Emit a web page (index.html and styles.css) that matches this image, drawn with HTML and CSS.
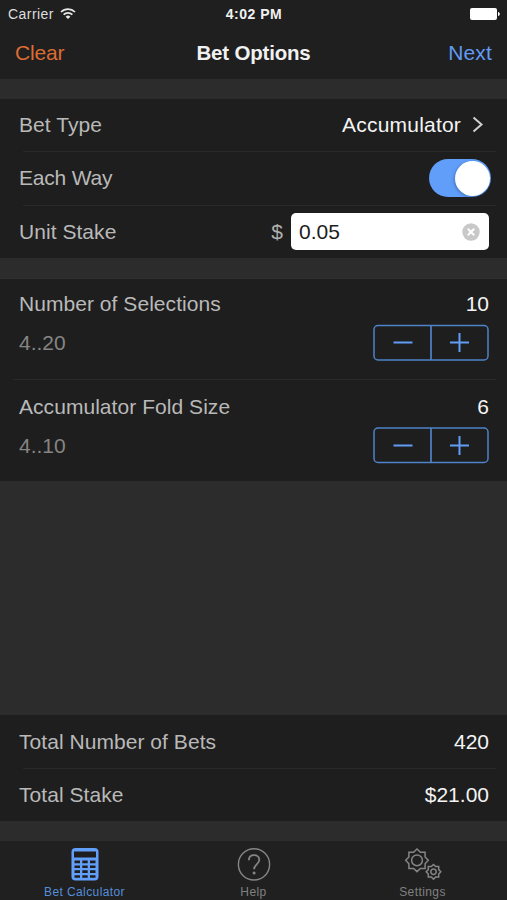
FILE: index.html
```html
<!DOCTYPE html>
<html lang="en">
<head>
<meta charset="utf-8">
<title>Bet Options</title>
<link rel="stylesheet" href="styles.css">
</head>
<body>
<div class="app">
  <header class="header">
    <div class="status">
      <div class="carrier"><span>Carrier</span>
        <svg width="16" height="12" viewBox="0 0 16 12" fill="none" stroke="#e6e6e6" stroke-width="1.7"><path d="M1 4a10 10 0 0 1 14 0M3.6 6.6a6.3 6.3 0 0 1 8.8 0"/><path d="M5.6 8.7a3.4 3.4 0 0 1 4.8 0L8 11.1z" fill="#e6e6e6" stroke="none"/></svg>
      </div>
      <span class="clock">4:02 PM</span>
      <svg class="battery" width="30" height="12" viewBox="0 0 30 12" fill="#fff"><rect width="27" height="12" rx="2"/><path d="M28 4c2.4.4 2.4 3.6 0 4z"/></svg>
    </div>
    <nav class="nav"><span class="clear">Clear</span><h1 class="title">Bet Options</h1><span class="next">Next</span></nav>
  </header>

  <section class="group first">
    <div class="row"><span class="label">Bet Type</span><span class="value accumulator">Accumulator</span>
      <svg class="chevron" width="12" height="18" viewBox="0 0 12 18" fill="none" stroke="#d0d0d0" stroke-width="2"><path d="M1.5 1.5 9.5 8.5l-8 7"/></svg>
    </div>
    <div class="row"><span class="label each-way">Each Way</span><span class="switch"><i class="knob"></i></span></div>
    <div class="row"><span class="label">Unit Stake</span><span class="dollar">$</span>
      <div class="field"><span class="amount">0.05</span>
        <svg width="18" height="18" viewBox="0 0 18 18"><circle cx="9" cy="9" r="8.7" fill="#c8c8c8"/><path d="m5.8 5.8 6.4 6.4m0-6.4-6.4 6.4" stroke="#fff" stroke-width="2"/></svg>
      </div>
    </div>
  </section>

  <section class="group counts">
    <div class="count">
      <div class="line"><span class="label">Number of Selections</span><span class="value">10</span></div>
      <div class="line second"><span class="range">4..20</span>
        <svg class="stepper" width="116" height="37" viewBox="0 0 116 37" fill="none" stroke="#4f83c9"><rect x="1" y="1.5" width="114" height="34.5" rx="4" stroke-width="1.5"/><path d="M58 1.5V36" stroke-width="1.7"/><path d="M20.5 18.5h19M77 18.5h19M86.5 9v19" stroke="#619cf5" stroke-width="2"/></svg>
      </div>
    </div>
    <div class="count">
      <div class="line"><span class="label">Accumulator Fold Size</span><span class="value">6</span></div>
      <div class="line second"><span class="range">4..10</span>
        <svg class="stepper" width="116" height="37" viewBox="0 0 116 37" fill="none" stroke="#4f83c9"><rect x="1" y="1" width="114" height="34.5" rx="4" stroke-width="1.5"/><path d="M58 1v34.5" stroke-width="1.7"/><path d="M20.5 18.5h19M77 18.5h19M86.5 9v19" stroke="#619cf5" stroke-width="2"/></svg>
      </div>
    </div>
  </section>

  <section class="group totals">
    <div class="row"><span class="label">Total Number of Bets</span><span class="value">420</span></div>
    <div class="row"><span class="label">Total Stake</span><span class="value">$21.00</span></div>
  </section>

  <footer class="tabs">
    <div class="tab active">
      <svg width="28" height="34" viewBox="0 0 28 34"><rect x=".5" width="27" height="32.5" rx="4" fill="#619ffb"/><path fill="#1e1e1e" d="M3 3.5h22v6H3zM3.5 12.5H9v2.7H3.5zM11.3 12.5h5.4v2.7h-5.4zM19 12.5h5.5v2.7H19zM3.5 17.4H9v2.7H3.5zM11.3 17.4h5.4v2.7h-5.4zM19 17.4h5.5v2.7H19zM3.5 22.3H9V25H3.5zM11.3 22.3h5.4V25h-5.4zM19 22.3h5.5V25H19zM3.5 27.2H9v2.5H3.5zM11.3 27.2h5.4v2.5h-5.4zM19 27.2h5.5v2.5H19z"/></svg>
      <span>Bet Calculator</span>
    </div>
    <div class="tab">
      <svg width="34" height="34" viewBox="0 0 34 34" fill="none" stroke="#858585" stroke-width="1.4"><circle cx="17" cy="16.4" r="15.6"/><path d="M11.8 12.2c.2-3.2 2.2-5 5.2-5s5.3 1.8 5.3 4.6c0 2.2-1.2 3.3-2.8 4.8-1.7 1.5-2.4 2.5-2.4 4.6" stroke-width="1.8"/><circle cx="17.1" cy="25" r=".8" fill="#858585"/></svg>
      <span>Help</span>
    </div>
    <div class="tab">
      <svg width="38" height="34" viewBox="0 0 38 34" fill="none" stroke="#858585" stroke-width="1.5"><g transform="translate(13 12.3)"><path d="M0-11.3 3.4-8.1 8.1-8.1 8.1-3.4 11.3 0 8.1 3.4 8.1 8.1 3.4 8.1 0 11.3-3.4 8.1-8.1 8.1-8.1 3.4-11.3 0-8.1-3.4-8.1-8.1-3.4-8.1z"/><circle r="5.4"/></g><g transform="translate(29.5 23.8)"><path d="M0-7.3 2.2-5.2 5.2-5.2 5.2-2.2 7.3 0 5.2 2.2 5.2 5.2 2.2 5.2 0 7.3-2.2 5.2-5.2 5.2-5.2 2.2-7.3 0-5.2-2.2-5.2-5.2-2.2-5.2z"/><circle r="2.7"/></g></svg>
      <span>Settings</span>
    </div>
  </footer>
</div>
</body>
</html>
```
FILE: styles.css
```css
* { box-sizing: border-box; }
body { margin: 0; background: #2c2c2c; font-family: "Liberation Sans", Arial, sans-serif; font-size: 21px; color: #f1f1f1; }
svg { display: block; flex: none; }
.app { width: 507px; height: 900px; display: flex; flex-direction: column; overflow: hidden; }
.header { height: 79px; background: #1f1f1f; flex: none; }
.status { height: 28px; display: grid; grid-template-columns: 1fr auto 1fr; align-items: center; padding: 0 7px 0 8px; font-size: 14px; }
.carrier { display: flex; align-items: center; gap: 6px; color: #dedede; letter-spacing: .45px; }
.clock { font-weight: bold; font-size: 14px; letter-spacing: .5px; }
.battery { justify-self: end; }
.nav { height: 51px; display: grid; grid-template-columns: 1fr auto 1fr; align-items: center; padding: 0 15px 2px 15px; line-height: 24px; }
.clear { color: #dc6c32; letter-spacing: -.2px; }
.title { margin: 0; font-size: 20.5px; font-weight: bold; letter-spacing: -.2px; }
.next { color: #619bf2; justify-self: end; letter-spacing: .15px; }
.group { background: #1e1e1e; flex: none; }
.first { margin-top: 20px; height: 159px; }
.row { height: 53.5px; display: flex; align-items: center; padding: 0 18px 0 19px; }
.first .row:first-child { height: 52px; }
.first .row + .row { padding-top: 1px; }
.totals .row:first-child { height: 53px; }
.row + .row, .count + .count { background: linear-gradient(#292929, #292929) 23px 0 / 473px 1px no-repeat; }
.label { color: #b9b9b9; margin-right: auto; white-space: nowrap; letter-spacing: .05px; }
.each-way { letter-spacing: -.2px; }
.value { color: #f4f4f4; }
.accumulator { letter-spacing: .2px; }
.chevron { margin: 0 5px 0 11px; }
.switch { width: 62px; height: 38px; margin-right: -2px; border-radius: 19px; background: #609ef9; display: flex; justify-content: flex-end; align-items: center; padding-right: 1px; }
.knob { width: 35px; height: 35px; border-radius: 50%; background: #fff; box-shadow: -1px 1px 3px #274d8277; }
.dollar { color: #b0b0b0; margin-right: 8px; }
.field { width: 198px; height: 37px; border-radius: 5px; background: #fff; display: flex; align-items: center; justify-content: space-between; padding: 0 9px 0 8px; color: #1c1c1c; }
.counts { margin-top: 20px; height: 203px; border-top: 1px solid #303030; }
.count { height: 100px; padding: 11px 18px 0 19px; }
.count + .count { height: 102px; padding-top: 14px; background-position: 13px 0; background-size: 483px 1px; }
.line { display: flex; align-items: center; justify-content: space-between; height: 27px; }
.second { height: 37px; margin-top: 7px; }
.range { color: #858585; padding-top: 1px; }
.totals { height: 106px; margin-top: auto; }
.totals .row + .row { padding-top: 1px; }
.tabs { height: 59px; margin-top: 20px; background: #202020; display: grid; grid-template-columns: repeat(3, 1fr); flex: none; }
.tab { display: flex; flex-direction: column; align-items: center; padding-top: 7px; color: #808080; font-size: 12px; letter-spacing: .4px; line-height: 14px; gap: 3px; }
.active { color: #558eda; }
```
